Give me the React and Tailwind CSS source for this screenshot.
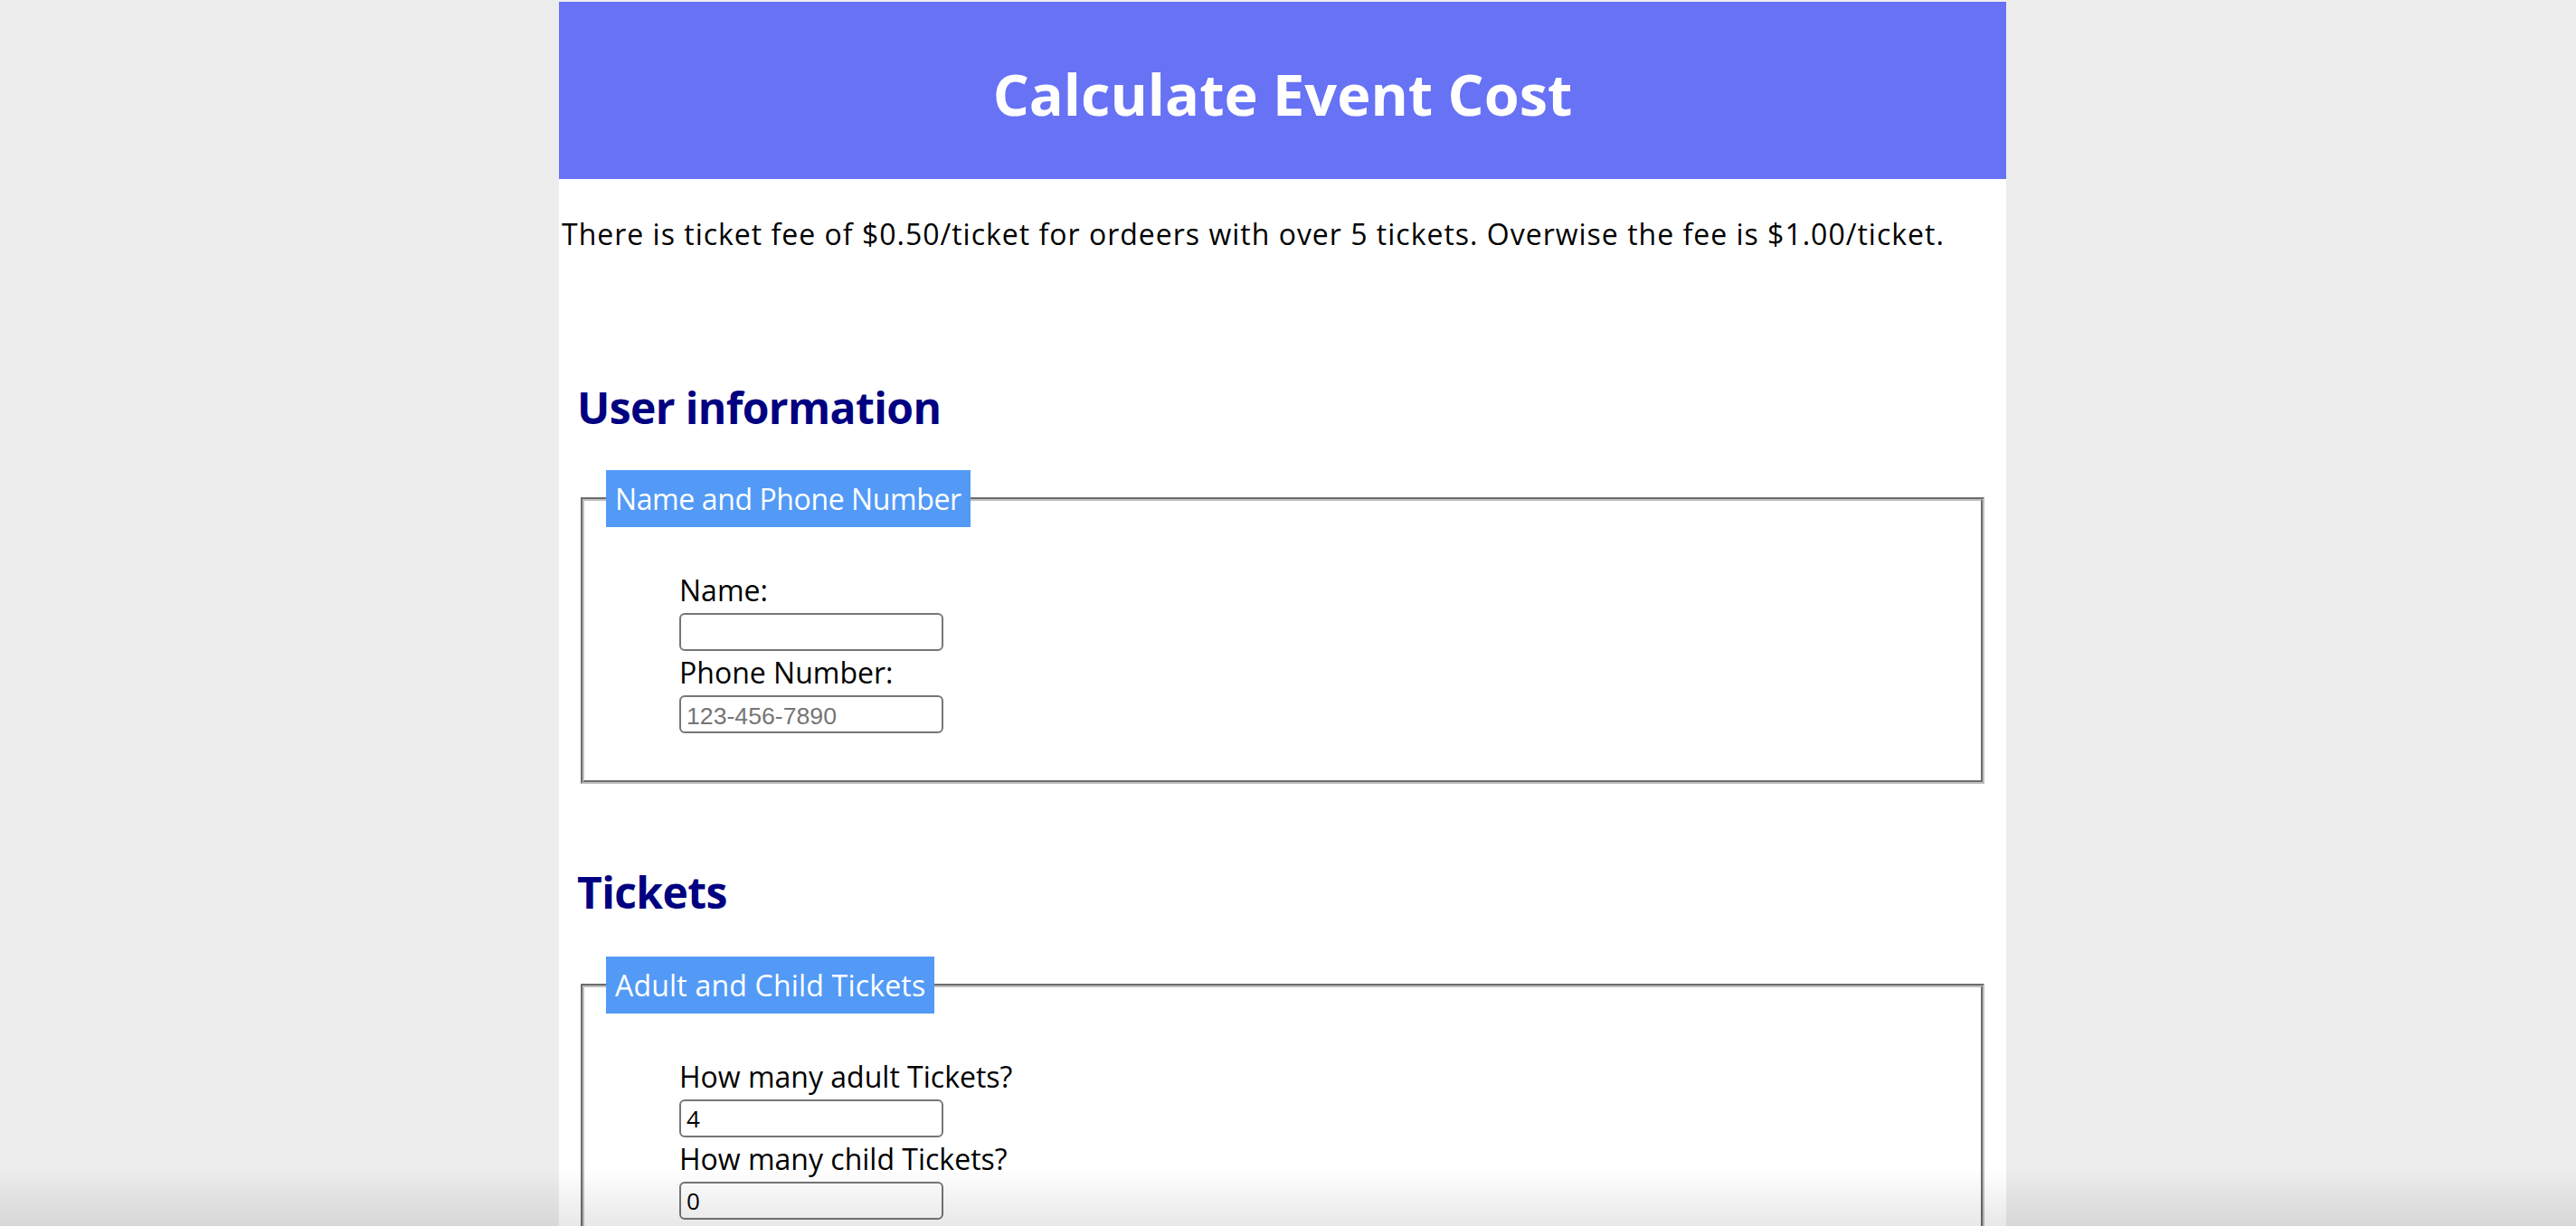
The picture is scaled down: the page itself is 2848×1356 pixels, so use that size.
export default function App() {
  return (
    <div className="min-h-screen bg-[#ededed] pt-[2px] pr-[12px] flex justify-center font-['Comic_Sans_MS','Open_Sans',sans-serif] text-black">
      <div className="w-[1600px] min-h-[1354px] bg-white">
        {/* Header */}
        <header className="h-[196px] pt-[6px] bg-[#6772f5] flex items-center justify-center">
          <h1 className="text-[63px] font-bold text-white leading-none">Calculate Event Cost</h1>
        </header>

        <p className="mt-[39px] pl-[3px] text-[32px] leading-[44px] tracking-[1px]">
          There is ticket fee of $0.50/ticket for ordeers with over 5 tickets. Overwise the fee is $1.00/ticket.
        </p>

        <form className="px-[20px]">
          {/* User information */}
          <h2 className="mt-[136px] text-[48px] leading-[67px] font-bold tracking-[-0.6px] text-[#000080]">User information</h2>
          <fieldset className="mt-[36px] mx-[4px] border-[4px] [border-style:groove] border-[#c0c0c0] px-[24px] pb-[52px]">
            <legend className="bg-[#529af6] text-white px-[10px] py-[10px] text-[32px] leading-[43px] tracking-[-0.4px]">
              Name and Phone Number
            </legend>
            <div className="pl-[81px] pt-[48px]">
              <label className="block text-[32px] leading-[44px]">Name:</label>
              <input
                type="text"
                className="block mt-[3px] w-[292px] h-[42px] border-2 border-[#767676] rounded-[6px] px-[6px] text-[26px] outline-none"
              />
              <label className="block mt-[2px] text-[32px] leading-[44px]">Phone Number:</label>
              <input
                type="text"
                placeholder="123-456-7890"
                className="block mt-[3px] w-[292px] h-[42px] border-2 border-[#767676] rounded-[6px] px-[6px] text-[26.67px] outline-none placeholder:text-[#757575] placeholder:font-['Liberation_Sans']"
              />
            </div>
          </fieldset>

          {/* Tickets */}
          <h2 className="mt-[86px] text-[48px] leading-[67px] font-bold tracking-[-0.6px] text-[#000080]">Tickets</h2>
          <fieldset className="mt-[38px] mx-[4px] border-[4px] [border-style:groove] border-[#c0c0c0] px-[24px] pb-[52px]">
            <legend className="bg-[#529af6] text-white px-[10px] py-[10px] text-[32px] leading-[43px] tracking-[0.2px]">
              Adult and Child Tickets
            </legend>
            <div className="pl-[81px] pt-[48px]">
              <label className="block text-[32px] leading-[44px]">How many adult Tickets?</label>
              <input
                type="number"
                defaultValue="4"
                className="block mt-[3px] w-[292px] h-[42px] border-2 border-[#767676] rounded-[6px] px-[6px] text-[26px] outline-none"
              />
              <label className="block mt-[2px] text-[32px] leading-[44px]">How many child Tickets?</label>
              <input
                type="number"
                defaultValue="0"
                className="block mt-[3px] w-[292px] h-[42px] border-2 border-[#767676] rounded-[6px] px-[6px] text-[26px] outline-none"
              />
            </div>
          </fieldset>
        </form>
      </div>

      {/* bottom window shadow */}
      <div className="pointer-events-none fixed inset-x-0 bottom-0 h-[64px] bg-linear-to-b from-transparent to-black/[0.09]" />
    </div>
  );
}
